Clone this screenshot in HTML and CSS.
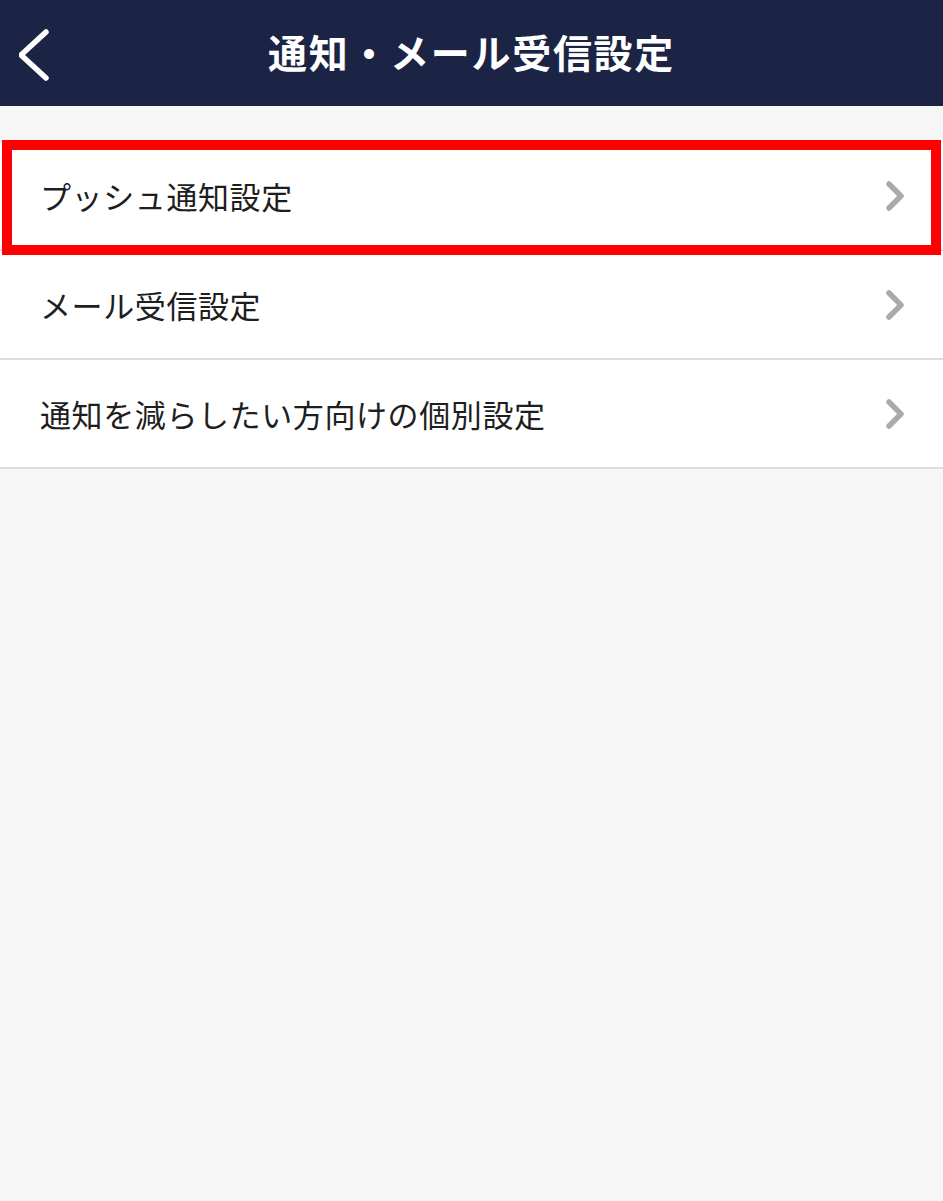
FILE: index.html
```html
<!DOCTYPE html>
<html lang="ja">
<head>
  <meta charset="UTF-8" />
  <meta name="viewport" content="width=device-width, initial-scale=1.0" />
  <title>通知・メール受信設定</title>
  <link rel="stylesheet" href="styles.css">
</head>
<body>
  <header class="top-bar">
    <a class="back-btn" href="#">
      <svg width="40" height="60" viewBox="0 0 40 60">
        <polyline points="27,10 2,33 27,56" fill="none" stroke="#fff" stroke-width="5.5" stroke-linecap="round" stroke-linejoin="round" />
      </svg>
    </a>
    <h1>通知・メール受信設定</h1>
  </header>

  <ul class="setting-list">
    <li class="setting-item highlighted">
      <span>プッシュ通知設定</span>
      <svg class="arrow" width="24" height="34" viewBox="0 0 24 34">
        <polyline points="6,5 18,17 6,29" fill="none" stroke="#aaa" stroke-width="5.5" stroke-linecap="round" stroke-linejoin="round" />
      </svg>
    </li>
    <li class="setting-item">
      <span>メール受信設定</span>
      <svg class="arrow" width="24" height="34" viewBox="0 0 24 34">
        <polyline points="6,5 18,17 6,29" fill="none" stroke="#aaa" stroke-width="5.5" stroke-linecap="round" stroke-linejoin="round" />
      </svg>
    </li>
    <li class="setting-item">
      <span>通知を減らしたい方向けの個別設定</span>
      <svg class="arrow" width="24" height="34" viewBox="0 0 24 34">
        <polyline points="6,5 18,17 6,29" fill="none" stroke="#aaa" stroke-width="5.5" stroke-linecap="round" stroke-linejoin="round" />
      </svg>
    </li>
  </ul>
</body>
</html>
```

FILE: styles.css
```css
body {
  margin: 0;
  background-color: #f6f6f6;
  font-family: "Noto Sans CJK JP", "Noto Sans", sans-serif;
  color: #1e1e1e;
  height: 100vh;
}
.top-bar {
  position: relative;
  height: 106px;
  background-color: #1b2444;
  display: flex;
  align-items: center;
  justify-content: center;
}
.top-bar h1 {
  margin: 0 0 4px;
  color: #fff;
  font-size: 39px;
  font-weight: 700;
  letter-spacing: 1.7px;
  line-height: 1;
}
.back-btn {
  position: absolute;
  left: 19px;
  top: 22px;
  display: block;
  height: 60px;
}
.setting-list {
  list-style: none;
  margin: 36px 0 0;
  padding: 0;
}
.setting-item {
  position: relative;
  height: 107px;
  background-color: #fff;
  border-bottom: 2px solid #dedede;
  display: flex;
  align-items: center;
  justify-content: space-between;
  padding: 0 36px 0 40px;
  font-size: 31px;
  letter-spacing: 0.6px;
  line-height: 1;
}
.setting-item .arrow {
  display: block;
}
.setting-item.highlighted::after {
  content: '';
  position: absolute;
  z-index: 1;
  left: 2px;
  right: 2px;
  top: -2px;
  bottom: -6px;
  border: 10px solid #ff0000;
  pointer-events: none;
}
```
